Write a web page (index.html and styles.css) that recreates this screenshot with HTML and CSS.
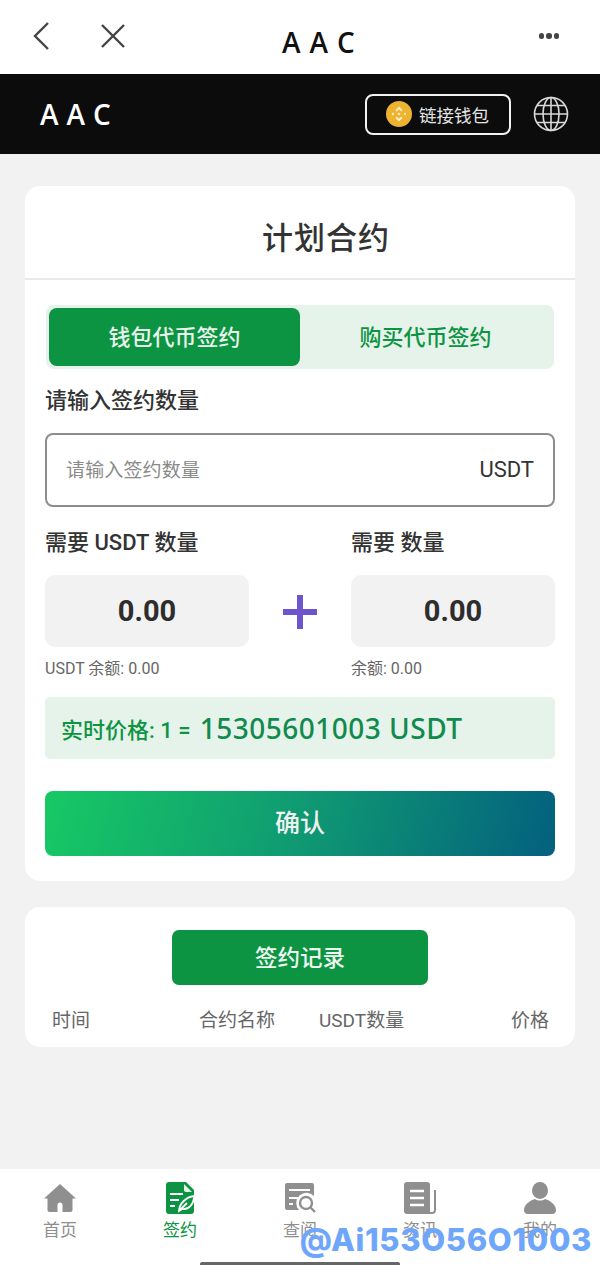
FILE: index.html
```html
<!DOCTYPE html>
<html lang="zh">
<head>
<meta charset="utf-8">
<title>AAC</title>
<link rel="stylesheet" href="styles.css">
</head>
<body>
<div class="phone">
  <header class="browser-bar">
    <div class="browser-left">
      <svg class="ic-back" viewBox="0 0 18 30"><path d="M16 2 3 15l13 13" /></svg>
      <svg class="ic-close" viewBox="0 0 26 26"><path d="M2 2l22 22M24 2 2 24" /></svg>
    </div>
    <div class="browser-title">AAC</div>
    <div class="browser-more"><i></i><i></i><i></i></div>
  </header>
  <div class="app-bar">
    <div class="app-logo">AAC</div>
    <div class="app-actions">
      <div class="wallet-btn">
        <svg class="bnb" viewBox="0 0 26 26"><circle cx="13" cy="13" r="13" fill="#eeb32f"/><g fill="#fff0c4"><path d="M13 5.500l3.600 3.600-1.400 1.400L13 8.300l-2.200 2.200-1.400-1.400z"/><path d="M13 20.500l-3.600-3.600 1.400-1.400 2.200 2.200 2.200-2.200 1.400 1.400z"/><path d="M7 11.600 8.400 13 7 14.400 5.600 13zM19 11.600l1.400 1.400-1.400 1.400-1.400-1.400zM13 11.400l1.600 1.600-1.600 1.600-1.600-1.600z"/></g></svg>
        <span>链接钱包</span>
      </div>
      <svg class="globe" viewBox="0 0 36 36"><g fill="none" stroke="#d8d8d8" stroke-width="1.600"><circle cx="18" cy="18" r="16.500"/><ellipse cx="18" cy="18" rx="8" ry="16.500"/><path d="M18 1.500v33M1.500 18h33M4 9.500h28M4 26.500h28"/></g></svg>
    </div>
  </div>
  <main class="content">
    <section class="card plan-card">
      <h1 class="plan-title">计划合约</h1>
      <div class="plan-body">
        <div class="tabs">
          <div class="tab tab-on">钱包代币签约</div>
          <div class="tab">购买代币签约</div>
        </div>
        <div class="label label-qty">请输入签约数量</div>
        <div class="qty-input"><span class="ph">请输入签约数量</span><span class="unit">USDT</span></div>
        <div class="needs">
          <div class="need">
            <div class="label">需要 USDT 数量</div>
            <div class="num-box">0.00</div>
            <div class="bal">USDT 余额: 0.00</div>
          </div>
          <div class="plus"><svg viewBox="0 0 34 34"><path d="M14 0h6v14h14v6H20v14h-6V20H0v-6h14z"/></svg></div>
          <div class="need">
            <div class="label">需要 数量</div>
            <div class="num-box">0.00</div>
            <div class="bal">余额: 0.00</div>
          </div>
        </div>
        <div class="price"><span>实时价格: 1 =</span><b>15305601003 USDT</b></div>
        <div class="confirm">确认</div>
      </div>
    </section>
    <section class="card rec-card">
      <div class="rec-btn">签约记录</div>
      <div class="rec-head"><span>时间</span><span>合约名称</span><span>USDT数量</span><span class="rec-price">价格</span></div>
    </section>
  </main>
  <nav class="tabbar">
    <div class="nav-item">
      <svg viewBox="0 0 32 32"><path fill="#8f8f8f" fill-rule="evenodd" d="M16 2 32 16.500h-3.500V28a2 2 0 0 1-2 2h-21a2 2 0 0 1-2-2V16.500H0zM13.500 30h5v-7a2.500 2.500 0 0 0-5 0z"/></svg>
      <span>首页</span>
    </div>
    <div class="nav-item nav-on">
      <svg viewBox="0 0 32 32"><path fill="#0d9443" d="M5 0h17l8 8v21a3 3 0 0 1-3 3H5a3 3 0 0 1-3-3V3a3 3 0 0 1 3-3z"/><path fill="#dff3e6" d="M20 2l8 8-6 0a2 2 0 0 1-2-2z"/><path fill="none" stroke="#fff" stroke-width="2.200" d="M6 12h13M6 18h9M6 24h5"/><path fill="none" stroke="#fff" stroke-width="1.800" d="M15 29c0-7 7-14 15-15 0 8-5 14-12 13zM15 29l8-8"/></svg>
      <span>签约</span>
    </div>
    <div class="nav-item">
      <svg viewBox="0 0 32 32"><path fill="#8f8f8f" d="M3 1h25a2 2 0 0 1 2 2v11a9 9 0 0 0-15 14H3a2 2 0 0 1-2-2V3a2 2 0 0 1 2-2z"/><path fill="none" stroke="#fff" stroke-width="2.200" d="M5 8h21M5 16h9M5 22h4"/><circle cx="22" cy="21" r="6" fill="none" stroke="#8f8f8f" stroke-width="2.400"/><path stroke="#8f8f8f" stroke-width="2.400" d="M26.500 25.500 31 30"/></svg>
      <span>查阅</span>
    </div>
    <div class="nav-item">
      <svg viewBox="0 0 32 32"><path fill="#8f8f8f" d="M3 0h20a3 3 0 0 1 3 3v29H3a3 3 0 0 1-3-3V3a3 3 0 0 1 3-3z"/><path fill="none" stroke="#fff" stroke-width="2.400" d="M6 9h14M6 16h14M6 23h14"/><path fill="none" stroke="#8f8f8f" stroke-width="2" d="M31 8v20a3 3 0 0 1-3 3h-4"/></svg>
      <span>资讯</span>
    </div>
    <div class="nav-item">
      <svg viewBox="0 0 32 32"><ellipse cx="16" cy="8.500" rx="8" ry="8.500" fill="#8f8f8f"/><path fill="#8f8f8f" d="M11 17c-6 2-11 6-11 11 0 2 1 4 4 4h24c3 0 4-2 4-4 0-5-5-9-11-11-3 2-7 2-10 0z"/></svg>
      <span>我的</span>
    </div>
  </nav>
  <div class="watermark">@Ai153O56O1003</div>
  <div class="home-bar"></div>
</div>
</body>
</html>
```
FILE: styles.css
```css
* { box-sizing: border-box; }
html, body { margin: 0; padding: 0; }
body { font-family: Roboto, "Noto Sans CJK SC", sans-serif; background: #f2f2f2; color: #333; }
.phone { position: relative; width: 600px; height: 1265px; overflow: hidden; display: flex; flex-direction: column; background: #f2f2f2; }

.browser-bar { height: 74px; background: #fff; display: flex; align-items: center; position: relative; flex: none; }
.browser-left { display: flex; align-items: center; padding-left: 32px; gap: 50px; margin-top: -2px; }
.ic-back { width: 18px; height: 30px; fill: none; stroke: #444; stroke-width: 2.400; }
.ic-close { width: 26px; height: 26px; fill: none; stroke: #444; stroke-width: 2.400; }
.browser-title { position: absolute; left: 282px; top: 26px; font: 600 28px/32px "Open Sans", "Noto Sans", sans-serif; letter-spacing: 9px; color: #111; }
.browser-more { position: absolute; right: 41px; top: 33px; display: flex; gap: 2px; }
.browser-more i { width: 5.500px; height: 5.500px; border-radius: 50%; background: #444; display: block; }

.app-bar { height: 80px; background: #0c0c0c; display: flex; align-items: center; justify-content: space-between; padding: 0 31px 0 40px; flex: none; }
.app-logo { font: 600 28px/32px "Open Sans", "Noto Sans", sans-serif; letter-spacing: 8px; color: #fff; }
.app-actions { display: flex; align-items: center; gap: 22px; }
.wallet-btn { width: 146px; height: 41px; border: 2px solid #f2f2f2; border-radius: 8px; display: flex; align-items: center; padding-left: 19px; gap: 7px; color: #e4e4e4; font-size: 17.500px; }
.bnb { width: 26px; height: 26px; flex: none; }
.globe { width: 36px; height: 36px; }

.content { flex: 1; padding: 32px 25px 0; }
.card { background: #fff; border-radius: 15px; }
.plan-card { height: 695px; }
.plan-title { margin: 0; height: 94px; padding-left: 52px; border-bottom: 2px solid #e9e9e9; text-align: center; font-size: 31px; font-weight: 500; line-height: 105px; color: #333; letter-spacing: 1px; }
.plan-body { padding: 25px 20px 0; }
.tabs { height: 64px; background: #e5f3ea; border-radius: 8px; padding: 3px; display: flex; margin: 0 1px; }
.tab { flex: 1; display: flex; align-items: center; justify-content: center; padding-bottom: 4px; font-size: 22px; font-weight: 500; color: #0d9443; border-radius: 8px; }
.tab-on { background: #0d9443; color: #e8f5ec; flex: 0 0 251px; }
.label { font-size: 22px; line-height: 32px; color: #333; font-weight: 500; }
.label-qty { margin-top: 16px; }
.qty-input { height: 74px; margin-top: 16px; border: 2px solid #8d8d8d; border-radius: 8px; display: flex; align-items: center; justify-content: space-between; padding: 0 19px 0 19px; }
.ph { font-size: 19px; letter-spacing: 0.150px; color: #8a8a8a; padding-bottom: 4px; }
.unit { font-size: 22px; color: #333; padding-bottom: 1px; }
.needs { display: flex; margin-top: 20px; }
.need { width: 204px; }
.plus { width: 102px; display: flex; justify-content: center; padding-top: 68px; }
.plus svg { width: 34px; height: 34px; fill: #6f55cb; }
.num-box { height: 72px; margin-top: 16px; background: #f2f2f2; border-radius: 10px; display: flex; align-items: center; justify-content: center; font-size: 29px; font-weight: 700; color: #2d2d2d; }
.bal { margin-top: 12px; font-size: 16px; line-height: 20px; color: #666; }
.price { height: 62px; margin-top: 18px; background: #e5f3ea; border-radius: 5px; display: flex; align-items: center; gap: 9px; padding-left: 16px; color: #0d9443; font-size: 22px; font-weight: 500; }
.price b { font: 500 28px/32px "Noto Sans", Roboto, sans-serif; letter-spacing: 0.500px; color: #118a4d; }
.confirm { height: 65px; margin-top: 32px; padding-bottom: 6px; border-radius: 8px; background: linear-gradient(105deg, #17c964 0%, #0f9a72 50%, #03607e 100%); color: #f1f1f1; font-size: 25px; font-weight: 500; display: flex; align-items: center; justify-content: center; }

.rec-card { margin-top: 26px; height: 140px; padding-top: 23px; }
.rec-btn { width: 256px; height: 55px; margin: 0 auto; padding-bottom: 4px; border-radius: 7px; background: #0d9443; color: #eef7f1; font-size: 22.500px; font-weight: 500; display: flex; align-items: center; justify-content: center; }
.rec-head { display: grid; grid-template-columns: 147px 120px 1fr auto; padding: 0 26px 0 27px; margin-top: 22px; font-size: 19px; line-height: 28px; color: #666; }

.tabbar { position: absolute; left: 0; right: 0; bottom: 0; height: 96px; background: #fff; display: flex; padding: 13px 0 0; }
.nav-item { flex: 1; display: flex; flex-direction: column; align-items: center; font-size: 17px; color: #8e8e8e; }
.nav-item svg { width: 32px; height: 32px; display: block; }
.nav-item span { margin-top: 4px; line-height: 24px; }
.nav-on { color: #0d9443; }
.watermark { position: absolute; right: 8px; bottom: 8px; font: 800 31px/34px Inter, "Liberation Sans", sans-serif; color: #6ea6fb; letter-spacing: 0.650px; }
.home-bar { position: absolute; left: 200px; bottom: 0; width: 200px; height: 3px; background: #666; border-radius: 2px 2px 0 0; }
```
